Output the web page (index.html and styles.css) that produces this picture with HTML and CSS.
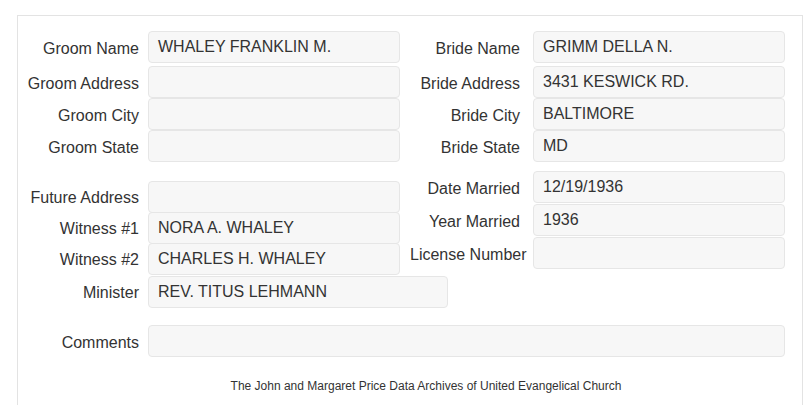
FILE: index.html
```html
<!DOCTYPE html>
<html lang="en">
<head>
    <meta charset="UTF-8">
    <title>Marriage Record</title>
    <link rel="stylesheet" href="styles.css">
</head>
<body>
    <div class="record">
        <!-- Groom / bride details -->
        <div class="pair top">
            <div class="col left">
                <div class="field first"><span class="lbl">Groom Name</span><div class="box">WHALEY FRANKLIN M.</div></div>
                <div class="field"><span class="lbl">Groom Address</span><div class="box"></div></div>
                <div class="field"><span class="lbl">Groom City</span><div class="box"></div></div>
                <div class="field"><span class="lbl">Groom State</span><div class="box"></div></div>
            </div>
            <div class="col right">
                <div class="field first"><span class="lbl">Bride Name</span><div class="box">GRIMM DELLA N.</div></div>
                <div class="field"><span class="lbl">Bride Address</span><div class="box">3431 KESWICK RD.</div></div>
                <div class="field"><span class="lbl">Bride City</span><div class="box">BALTIMORE</div></div>
                <div class="field"><span class="lbl">Bride State</span><div class="box">MD</div></div>
            </div>
        </div>

        <!-- Ceremony details -->
        <div class="pair bottom">
            <div class="col left">
                <div class="field"><span class="lbl">Future Address</span><div class="box"></div></div>
                <div class="field"><span class="lbl">Witness #1</span><div class="box">NORA A. WHALEY</div></div>
                <div class="field"><span class="lbl">Witness #2</span><div class="box">CHARLES H. WHALEY</div></div>
                <div class="field minister"><span class="lbl">Minister</span><div class="box box-mid">REV. TITUS LEHMANN</div></div>
            </div>
            <div class="col right">
                <div class="field"><span class="lbl">Date Married</span><div class="box">12/19/1936</div></div>
                <div class="field"><span class="lbl">Year Married</span><div class="box">1936</div></div>
                <div class="field"><span class="lbl">License Number</span><div class="box"></div></div>
            </div>
        </div>

        <div class="field comments"><span class="lbl">Comments</span><div class="box box-wide"></div></div>

        <p class="footer">The John and Margaret Price Data Archives of United Evangelical Church</p>
    </div>
</body>
</html>
```

FILE: styles.css
```css
body {
    font-family: "Liberation Sans", Arial, sans-serif;
    color: #333333;
    background-color: #FFFFFF;
    margin: 0;
    padding: 0;
}

/* Outer panel */
.record {
    box-sizing: border-box;
    margin: 15px 2px 0 17px;
    height: 390px;
    border: 1px solid #e3e3e3;
    border-bottom: none;
}

.pair {
    display: flex;
}

.top {
    padding-top: 15px;
}

.col {
    display: flex;
    flex-direction: column;
}

.left {
    width: 392px;
}

.right {
    flex: 1;
}

.bottom .left {
    padding-top: 19px;
}

.bottom .left .field {
    height: 31px;
}

.bottom .left .minister {
    height: 34px;
    align-items: flex-end;
}

.bottom .right {
    padding-top: 9px;
    gap: 1px;
}

/* One label + value row */
.field {
    display: flex;
    align-items: center;
    height: 32px;
    font-size: 16px;
}

.field.first {
    margin-bottom: 3px;
}

.lbl {
    flex-shrink: 0;
    white-space: nowrap;
    text-align: right;
    padding-top: 3px;
}

.minister .lbl {
    padding-bottom: 6px;
}

.left .lbl,
.comments .lbl {
    width: 121px;
    margin-right: 9px;
}

.right .lbl {
    width: 110px;
    margin-right: 13px;
}

.box {
    box-sizing: border-box;
    flex-shrink: 0;
    width: 252px;
    height: 32px;
    padding: 6px 9px;
    line-height: 18px;
    background-color: #f7f7f7;
    border: 1px solid #e6e6e6;
    border-radius: 4px;
    white-space: nowrap;
}

.box-mid {
    width: 300px;
}

.comments {
    margin-top: 17px;
}

.box-wide {
    width: 637px;
}

/* Footer credit */
.footer {
    margin: 21px 0 0 0;
    padding-left: 32px;
    font-size: 12px;
    line-height: 16px;
    text-align: center;
}
```
